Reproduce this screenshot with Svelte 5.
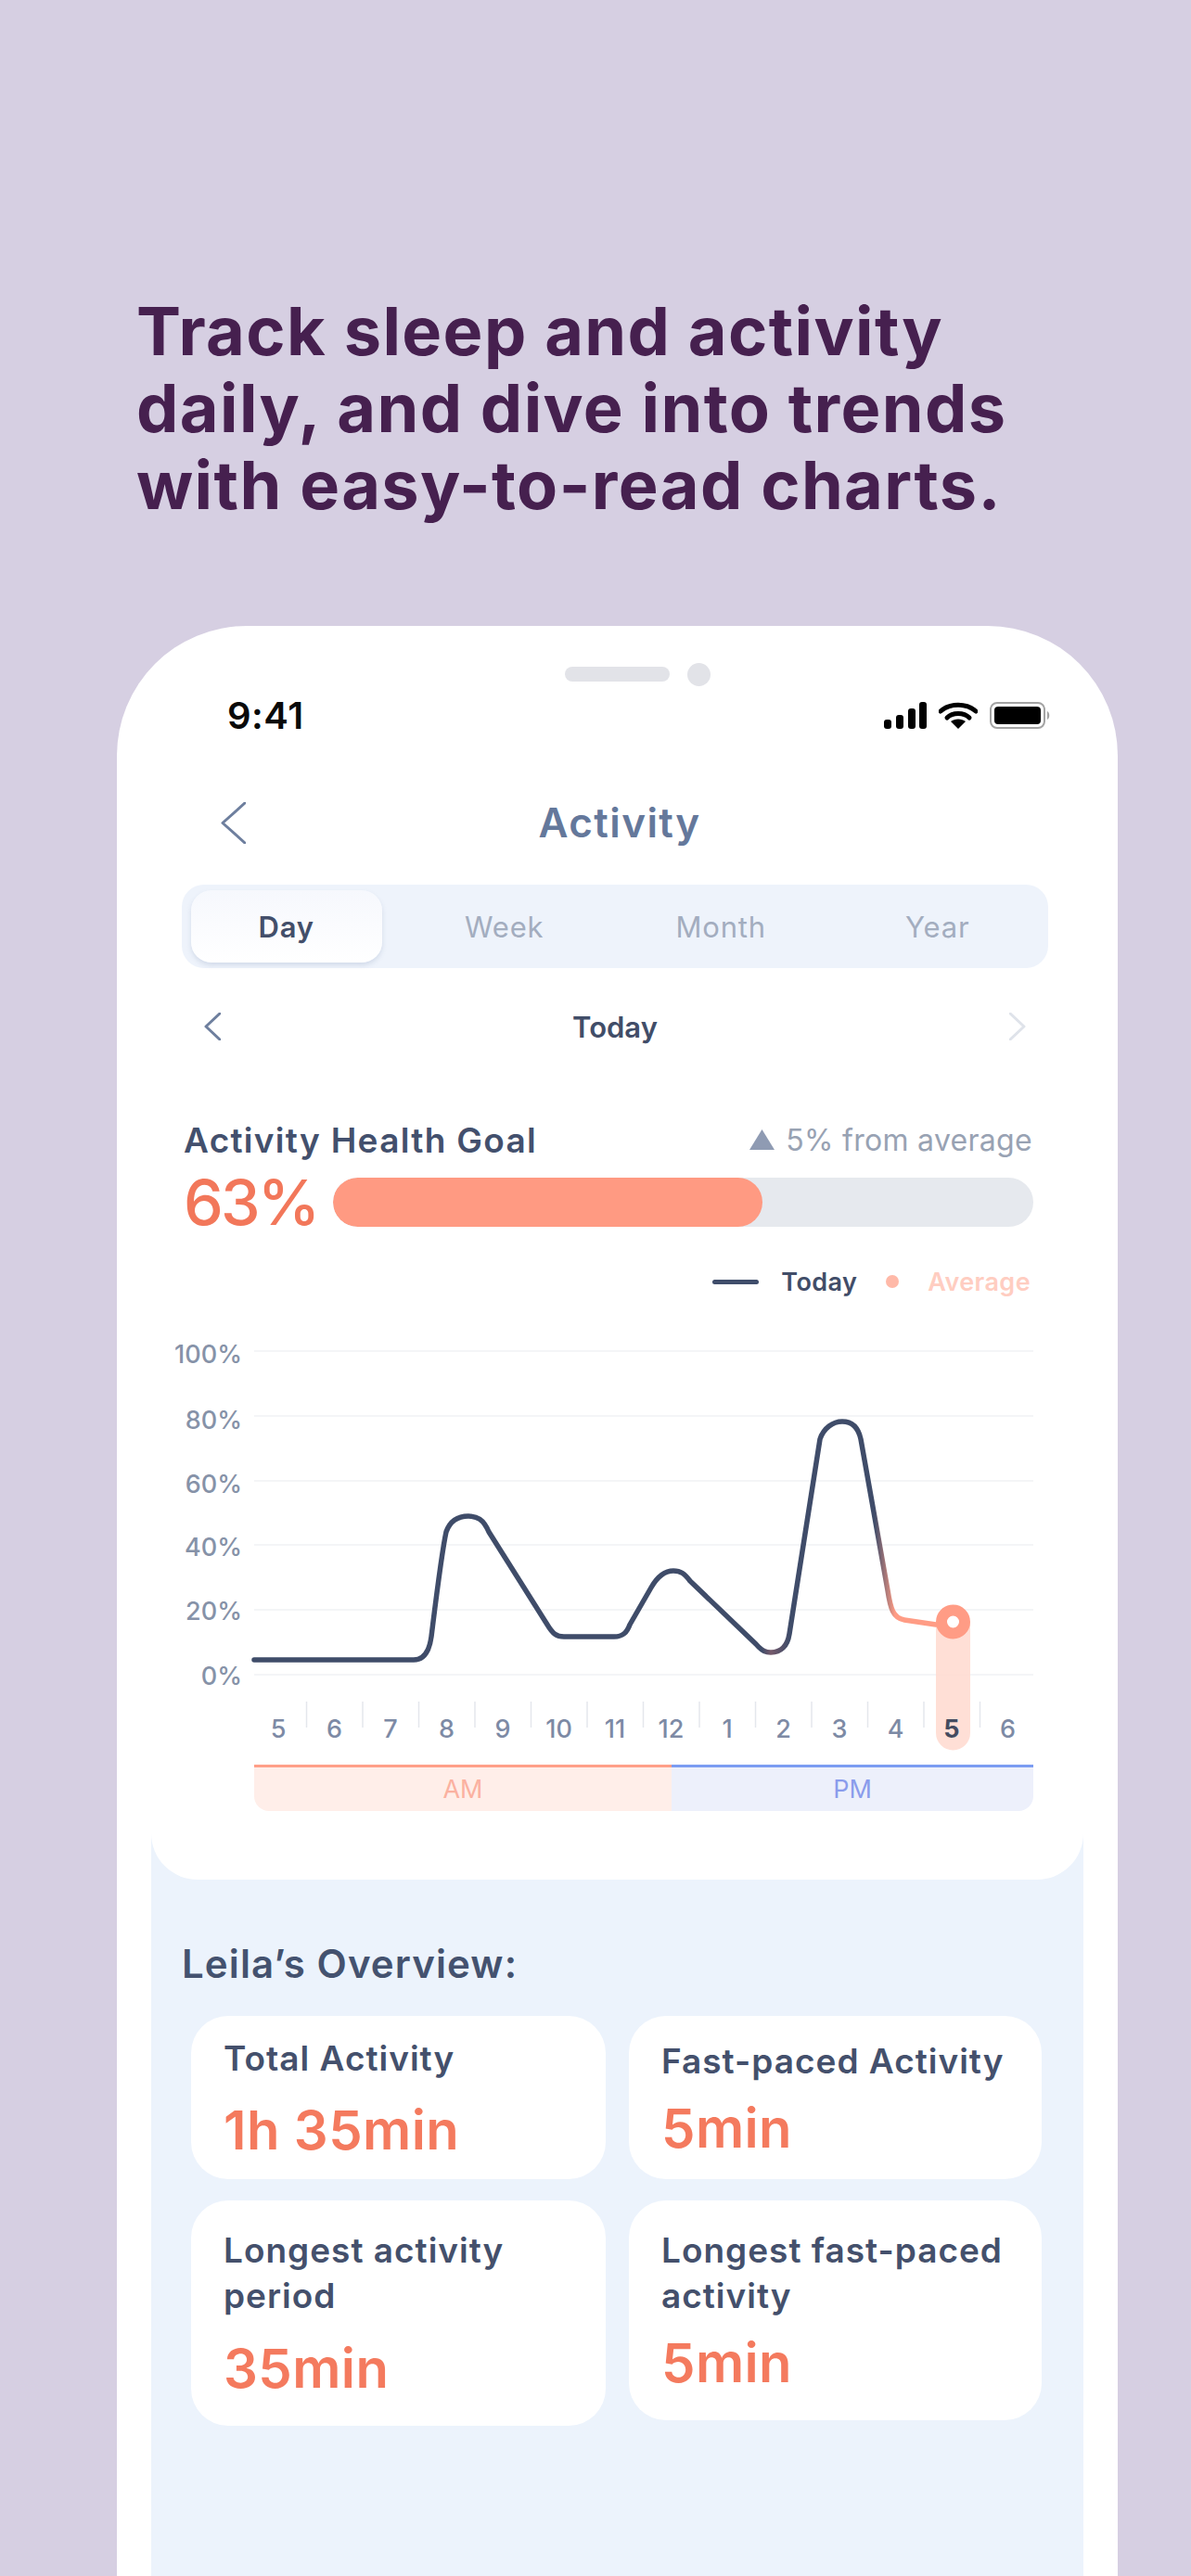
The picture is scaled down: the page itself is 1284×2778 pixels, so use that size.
<script>
  const tabs = ['Day', 'Week', 'Month', 'Year'];
  const yLabels = [
    { text: '100%', y: 1457, textY: 1470 },
    { text: '80%', y: 1527, textY: 1541 },
    { text: '60%', y: 1597, textY: 1610 },
    { text: '40%', y: 1666, textY: 1678 },
    { text: '20%', y: 1736, textY: 1747 },
    { text: '0%', y: 1806, textY: 1817 }
  ];
  const hours = [5, 6, 7, 8, 9, 10, 11, 12, 1, 2, 3, 4, 5, 6];
  const hourX = (i) => 300 + i * 60.5;
  const cards = [
    { id: 'total', label: ['Total Activity'], value: '1h 35min' },
    { id: 'fast', label: ['Fast-paced Activity'], value: '5min' },
    { id: 'longest', label: ['Longest activity', 'period'], value: '35min' },
    { id: 'longest-fast', label: ['Longest fast-paced', 'activity'], value: '5min' }
  ];
  const curve =
    'M274 1790 H446 C458 1790 463 1780 465 1765 C470 1725 476 1675 481 1652 C486 1638 496 1635 505 1635 ' +
    'C514 1635 521 1638 527 1652 L590 1752 C596 1762 600 1765 608 1765 H662 C672 1765 676 1760 679 1752 ' +
    'L702 1712 C710 1698 718 1694 726 1694 C734 1694 738 1697 744 1705 L815 1773 C822 1781 826 1782 831 1782 ' +
    'C842 1782 849 1775 851 1762 L884 1552 C888 1540 898 1533 908 1533 C918 1533 925 1538 928 1552 L957 1715 ' +
    'C960 1735 963 1745 975 1747 L1009 1752';
</script>

<div class="page">
  <h1>Track sleep and activity<br />daily, and dive into trends<br />with easy-to-read charts.</h1>

  <div class="phone">
    <div class="notch">
      <span class="speaker"></span>
      <span class="camera"></span>
    </div>

    <div class="status">
      <span class="time">9:41</span>
      <div class="status-icons">
        <svg width="46" height="29" viewBox="0 0 46 29">
          <rect x="0" y="19" width="8" height="10" rx="3" />
          <rect x="13" y="14" width="8" height="15" rx="3" />
          <rect x="26" y="7" width="8" height="22" rx="3" />
          <rect x="38" y="0" width="8" height="29" rx="3" />
        </svg>
        <svg width="42" height="29" viewBox="0 0 42 29">
          <path d="M2 10 C12 1 30 1 40 10" class="arc" />
          <path d="M9 17 C15 11 27 11 33 17" class="arc" />
          <path d="M21 29 L13 21 C17 17.500 25 17.500 29 21 Z" />
        </svg>
        <svg width="66" height="31" viewBox="0 0 66 31">
          <rect x="1" y="2" width="58" height="27" rx="7" class="batt-case" />
          <rect x="5" y="6" width="50" height="19" rx="4" />
          <path d="M62 11 C65 12 65 19 62 20 Z" class="batt-cap" />
        </svg>
      </div>
    </div>

    <div class="panel">
      <section class="card-top">
        <header class="nav">
          <svg class="back" width="27" height="45" viewBox="0 0 27 45">
            <path d="M26 1 L2 22.500 L26 44" />
          </svg>
          <span class="title">Activity</span>
        </header>

        <div class="tabs">
          {#each tabs as tab, i}
            <div class="tab" class:active={i === 0}>{tab}</div>
          {/each}
        </div>

        <div class="date">
          <svg class="prev" width="18" height="30" viewBox="0 0 18 30">
            <path d="M17 1 L2 15 L17 29" />
          </svg>
          <span>Today</span>
          <svg class="next" width="18" height="30" viewBox="0 0 18 30">
            <path d="M1 1 L16 15 L1 29" />
          </svg>
        </div>

        <div class="goal-head">
          <span class="goal-title">Activity Health Goal</span>
          <span class="goal-delta">
            <svg width="27" height="22" viewBox="0 0 27 22"><path d="M13.500 0 L27 22 H0 Z" /></svg>
            5% from average
          </span>
        </div>

        <div class="goal-bar">
          <span class="pct">63%</span>
          <div class="track"><div class="fill" style="width: 61.300%"></div></div>
        </div>

        <div class="legend">
          <span class="legend-line"></span>
          <span class="legend-today">Today</span>
          <span class="legend-dot"></span>
          <span class="legend-avg">Average</span>
        </div>

        <svg class="chart" width="945" height="460" viewBox="175 1440 945 460">
          <defs>
            <linearGradient id="lineFade" gradientUnits="userSpaceOnUse" x1="274" y1="0" x2="1009" y2="0">
              <stop offset="0.745" stop-color="#3f4c69" />
              <stop offset="0.758" stop-color="#75596a" />
              <stop offset="0.785" stop-color="#3f4c69" />
              <stop offset="0.91" stop-color="#3f4c69" />
              <stop offset="0.94" stop-color="#ff9c85" />
            </linearGradient>
          </defs>

          {#each yLabels as l}
            <line x1="274" x2="1114" y1={l.y} y2={l.y} class="grid" />
            <text x="261" y={l.textY} class="y-label">{l.text}</text>
          {/each}

          <path
            d="M1009 1749 H1046 V1869 A18.500 18.500 0 0 1 1009 1869 Z"
            class="highlight"
          />

          {#each hours as h, i}
            {#if i < 13}
              <line x1={hourX(i) + 30.500} x2={hourX(i) + 30.500} y1="1835" y2="1863" class="tick" />
            {/if}
            <text x={hourX(i)} y="1874" class="hour" class:now={i === 12}>{h}</text>
          {/each}

          <path d={curve} class="line" stroke="url(#lineFade)" />
          <circle cx="1027.500" cy="1749" r="12.500" class="dot" />
        </svg>

        <div class="ampm">
          <div class="am">AM</div>
          <div class="pm">PM</div>
        </div>
      </section>

      <h2>Leila’s Overview:</h2>

      <div class="cards">
        {#each cards as card}
          <div class="card {card.id}">
            <div class="card-label">
              {#each card.label as line}
                <div>{line}</div>
              {/each}
            </div>
            <div class="card-value">{card.value}</div>
          </div>
        {/each}
      </div>
    </div>
  </div>
</div>

<style>
  :global(body) {
    margin: 0;
    background: #d6cfe2;
  }

  .page {
    width: 1284px;
    height: 2778px;
    overflow: hidden;
    background: #d6cfe2;
    font-family: Inter, "Noto Sans", sans-serif;
  }

  h1 {
    margin: 0;
    padding: 315px 0 0 147px;
    font-size: 72px;
    line-height: 83px;
    font-weight: 700;
    letter-spacing: 1.4px;
    color: #46204f;
    white-space: nowrap;
  }

  .phone {
    margin: 111px 0 0 126px;
    width: 1079px;
    height: 2103px;
    background: #fff;
    border-radius: 140px 140px 0 0;
    padding-top: 40px;
    box-sizing: border-box;
  }

  .notch {
    display: flex;
    align-items: center;
    gap: 19px;
    height: 24px;
    margin-left: 483px;
  }

  .speaker {
    width: 113px;
    height: 16px;
    border-radius: 8px;
    background: #e2e3e8;
  }

  .camera {
    width: 25px;
    height: 25px;
    border-radius: 50%;
    background: #e2e3e8;
  }

  .status {
    display: flex;
    justify-content: space-between;
    align-items: center;
    height: 46px;
    margin-top: 9px;
    padding: 0 72px 0 119px;
  }

  .time {
    font-size: 40px;
    font-weight: 600;
    letter-spacing: 0.5px;
    color: #0a0a0a;
    font-family: Inter, sans-serif;
  }

  .status-icons {
    display: flex;
    align-items: center;
    gap: 13px;
  }

  .arc {
    fill: none;
    stroke: #000;
    stroke-width: 5px;
    stroke-linecap: round;
  }

  .batt-case {
    fill: none;
    stroke: #a3a3a3;
    stroke-width: 2px;
  }

  .batt-cap {
    fill: #a3a3a3;
  }

  .panel {
    margin: 0 37px;
    height: 1984px;
    background: #ecf3fc;
  }

  .card-top {
    background: #fff;
    border-radius: 0 0 50px 50px;
    padding: 50px 0 74px;
  }

  .nav {
    display: grid;
    grid-template-columns: 1fr auto 1fr;
    align-items: center;
    height: 86px;
    margin-bottom: 24px;
    padding-left: 75px;
    padding-right: 70px;
  }

  .back {
    justify-self: start;
  }

  .back path,
  .prev path,
  .next path {
    fill: none;
    stroke-linecap: round;
    stroke-linejoin: round;
  }

  .back path {
    stroke: #6e7f9e;
    stroke-width: 3px;
  }

  .title {
    font-size: 44px;
    font-weight: 600;
    letter-spacing: 1.4px;
    color: #64789b;
  }

  .tabs {
    display: grid;
    grid-template-columns: repeat(4, 1fr);
    height: 90px;
    margin: 0 38px 0 33px;
    border-radius: 24px;
    background: #eef3fb;
  }

  .tab {
    display: flex;
    align-items: center;
    justify-content: center;
    padding-right: 5px;
    font-size: 31px;
    letter-spacing: 0.8px;
    color: #a3adbf;
  }

  .tab.active {
    margin: 6px 18px 6px 10px;
    padding-right: 0;
    border-radius: 22px;
    background: linear-gradient(#f6f8fd, #fff);
    box-shadow: 0 3px 5px rgba(150, 165, 195, 0.3);
    color: #434f6a;
    font-weight: 600;
  }

  .date {
    display: grid;
    grid-template-columns: 1fr auto 1fr;
    align-items: center;
    height: 60px;
    margin-top: 33px;
    padding: 0 62px 0 57px;
    font-size: 31px;
    font-weight: 600;
    color: #414d68;
  }

  .prev path {
    stroke: #6e7f9e;
    stroke-width: 3px;
  }

  .next {
    justify-self: end;
  }

  .next path {
    stroke: #dfe3ea;
    stroke-width: 3px;
  }

  .goal-head {
    display: flex;
    justify-content: space-between;
    align-items: center;
    height: 44px;
    margin: 70px 55px 0 35px;
  }

  .goal-title {
    font-size: 37px;
    font-weight: 600;
    letter-spacing: 1.3px;
    color: #43506d;
  }

  .goal-delta {
    display: flex;
    align-items: center;
    gap: 12px;
    font-size: 32px;
    letter-spacing: 0.3px;
    color: #98a2b3;
  }

  .goal-delta svg {
    fill: #8f9bb3;
  }

  .goal-bar {
    display: flex;
    align-items: center;
    height: 53px;
    margin: 19px 54px 0 35px;
  }

  .pct {
    width: 161px;
    font-size: 68px;
    line-height: 53px;
    font-weight: 500;
    letter-spacing: -2.8px;
    color: #f2775a;
  }

  .track {
    flex: 1;
    height: 53px;
    border-radius: 27px;
    background: #e6e9ee;
    overflow: hidden;
  }

  .fill {
    height: 100%;
    border-radius: 27px;
    background: #ff9a82;
  }

  .legend {
    display: flex;
    align-items: center;
    justify-content: flex-end;
    height: 40px;
    margin: 39px 57px 0 0;
    font-size: 27px;
    font-weight: 600;
    letter-spacing: 0.4px;
  }

  .legend-line {
    width: 50px;
    height: 5px;
    border-radius: 3px;
    background: #3f4d6b;
    margin-right: 24px;
  }

  .legend-today {
    color: #414d68;
  }

  .legend-dot {
    width: 14px;
    height: 14px;
    border-radius: 50%;
    background: #ffb9a8;
    margin: 0 31px;
  }

  .legend-avg {
    color: #ffcdc1;
  }

  .chart {
    display: block;
    margin: 38px 0 0 12px;
    font-family: Inter, sans-serif;
  }

  .grid {
    stroke: #f4f5f7;
    stroke-width: 2px;
  }

  .y-label {
    font-size: 27px;
    font-weight: 500;
    fill: #8692a8;
    text-anchor: end;
  }

  .tick {
    stroke: #e4e7ec;
    stroke-width: 1.500px;
  }

  .hour {
    font-size: 27px;
    font-weight: 500;
    fill: #7d8aa5;
    text-anchor: middle;
  }

  .hour.now {
    font-weight: 700;
    fill: #444c60;
  }

  .highlight {
    fill: #ffd9cf;
    fill-opacity: 0.85;
  }

  .line {
    fill: none;
    stroke-width: 5.500px;
    stroke-linecap: round;
    stroke-linejoin: round;
  }

  .dot {
    fill: #fff;
    stroke: #ff9c85;
    stroke-width: 12px;
  }

  .ampm {
    display: flex;
    height: 50px;
    margin: 3px 54px 0 111px;
    font-size: 27px;
    border-radius: 0 0 16px 16px;
    overflow: hidden;
  }

  .am,
  .pm {
    display: flex;
    align-items: center;
    justify-content: center;
    box-sizing: border-box;
  }

  .am {
    width: 450px;
    background: #ffeee9;
    border-top: 3px solid #ff9f88;
    color: #fbb1a0;
  }

  .pm {
    flex: 1;
    background: #edf0fb;
    border-top: 3px solid #7b9cf2;
    color: #8a9cec;
  }

  h2 {
    margin: 69px 0 0;
    padding-left: 33px;
    height: 44px;
    line-height: 44px;
    font-size: 42px;
    font-weight: 600;
    letter-spacing: 1.1px;
    color: #44526f;
  }

  .cards {
    display: grid;
    grid-template-columns: 447px 445px;
    gap: 23px 25px;
    align-items: start;
    margin: 34px 0 0 43px;
  }

  .card {
    background: #fff;
    border-radius: 40px;
    box-sizing: border-box;
    padding: 21px 12px 19px 35px;
  }

  .card.fast {
    padding: 24px 12px 21px 35px;
  }

  .card.longest {
    padding: 29px 12px 28px 35px;
  }

  .card.longest-fast {
    padding: 29px 12px 28px 35px;
  }

  .card-label {
    font-size: 37px;
    line-height: 49px;
    font-weight: 600;
    letter-spacing: 1px;
    color: #44506c;
  }

  .card-value {
    margin-top: 19px;
    font-size: 58px;
    line-height: 68px;
    font-weight: 600;
    letter-spacing: 0.4px;
    color: #f47a5e;
  }

  .fast .card-value,
  .longest-fast .card-value {
    margin-top: 14px;
  }

  .longest .card-value {
    margin-top: 20px;
  }
</style>
